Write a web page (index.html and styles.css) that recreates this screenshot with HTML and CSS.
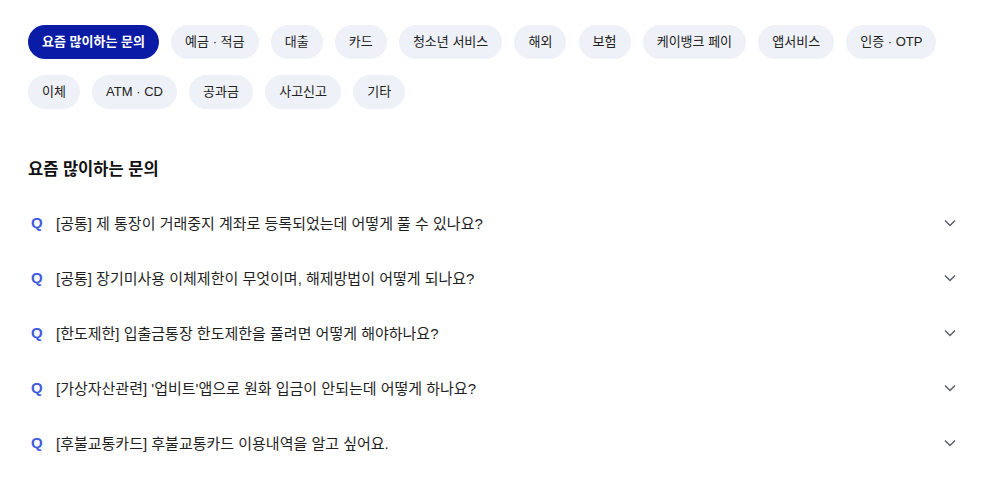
FILE: index.html
```html
<!DOCTYPE html>
<html lang="ko">
<head>
<meta charset="utf-8">
<link rel="stylesheet" href="styles.css">
</head>
<body>
<div class="page">
  <div class="tabs">
    <button class="tab active">요즘 많이하는 문의</button>
    <button class="tab">예금 · 적금</button>
    <button class="tab">대출</button>
    <button class="tab">카드</button>
    <button class="tab">청소년 서비스</button>
    <button class="tab">해외</button>
    <button class="tab">보험</button>
    <button class="tab">케이뱅크 페이</button>
    <button class="tab">앱서비스</button>
    <button class="tab">인증 · OTP</button>
    <button class="tab">이체</button>
    <button class="tab">ATM · CD</button>
    <button class="tab">공과금</button>
    <button class="tab">사고신고</button>
    <button class="tab">기타</button>
  </div>
  <h2 class="title">요즘 많이하는 문의</h2>
  <ul class="faq">
    <li class="item"><span class="q">Q</span><span class="text">[공통] 제 통장이 거래중지 계좌로 등록되었는데 어떻게 풀 수 있나요?</span><svg class="chev" width="12" height="8" viewBox="0 0 12 8"><path d="M1 1.5 L6 6.5 L11 1.5" fill="none" stroke="#5b5f6b" stroke-width="1.5"/></svg></li>
    <li class="item"><span class="q">Q</span><span class="text">[공통] 장기미사용 이체제한이 무엇이며, 해제방법이 어떻게 되나요?</span><svg class="chev" width="12" height="8" viewBox="0 0 12 8"><path d="M1 1.5 L6 6.5 L11 1.5" fill="none" stroke="#5b5f6b" stroke-width="1.5"/></svg></li>
    <li class="item"><span class="q">Q</span><span class="text">[한도제한] 입출금통장 한도제한을 풀려면 어떻게 해야하나요?</span><svg class="chev" width="12" height="8" viewBox="0 0 12 8"><path d="M1 1.5 L6 6.5 L11 1.5" fill="none" stroke="#5b5f6b" stroke-width="1.5"/></svg></li>
    <li class="item"><span class="q">Q</span><span class="text">[가상자산관련] '업비트'앱으로 원화 입금이 안되는데 어떻게 하나요?</span><svg class="chev" width="12" height="8" viewBox="0 0 12 8"><path d="M1 1.5 L6 6.5 L11 1.5" fill="none" stroke="#5b5f6b" stroke-width="1.5"/></svg></li>
    <li class="item"><span class="q">Q</span><span class="text">[후불교통카드] 후불교통카드 이용내역을 알고 싶어요.</span><svg class="chev" width="12" height="8" viewBox="0 0 12 8"><path d="M1 1.5 L6 6.5 L11 1.5" fill="none" stroke="#5b5f6b" stroke-width="1.5"/></svg></li>
  </ul>
</div>
</body>
</html>
```

FILE: styles.css
```css
* { box-sizing: border-box; }
body {
  margin: 0;
  background: #fff;
  font-family: "Liberation Sans", "Noto Sans CJK KR", sans-serif;
  color: #1a1a1a;
}
.page {
  padding: 25px 28px 0 28px;
}
.tabs {
  display: flex;
  flex-wrap: wrap;
  gap: 16px 12.2px;
  width: 920px;
}
.tab {
  height: 34px;
  padding: 0 14px;
  border: none;
  border-radius: 17px;
  background: #eef1f7;
  color: #222;
  font-family: inherit;
  font-size: 13px;
  line-height: 34px;
}
.tab.active {
  background: #0a1ca6;
  color: #fff;
  font-weight: 700;
}
.title {
  margin: 48px 0 0 0;
  font-size: 16.5px;
  font-weight: 700;
  line-height: 24px;
  color: #111;
}
.faq {
  list-style: none;
  margin: 14px 0 0 0;
  padding: 0;
  width: 928px;
}
.item {
  display: flex;
  align-items: center;
  height: 55px;
}
.q {
  width: 28px;
  padding-left: 3px;
  color: #3f5ce0;
  font-weight: 700;
  font-size: 15px;
}
.text {
  flex: 1;
  font-size: 15px;
  color: #1f1f1f;
}
```
